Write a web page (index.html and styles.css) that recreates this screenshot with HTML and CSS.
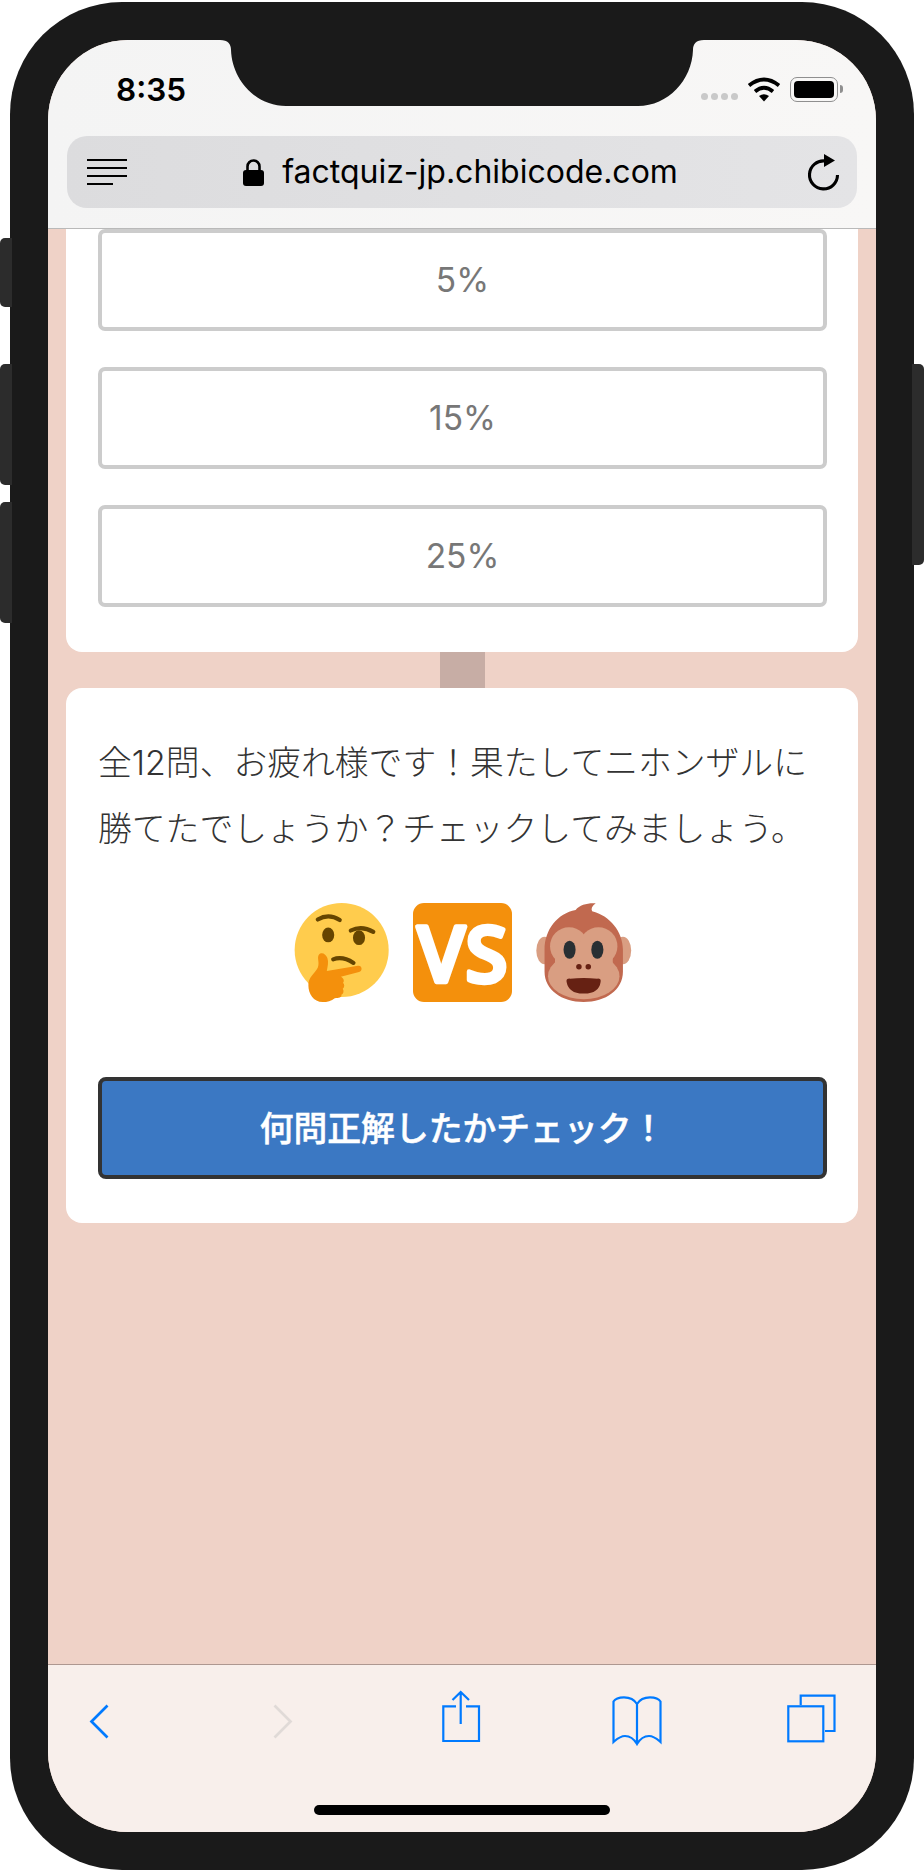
FILE: index.html
```html
<!DOCTYPE html>
<html lang="ja">
<head>
<meta charset="utf-8">
<title>factquiz-jp.chibicode.com</title>
<link rel="stylesheet" href="styles.css">
</head>
<body>
<div class="phone">
  <span class="side side-l side-mute"></span>
  <span class="side side-l side-up"></span>
  <span class="side side-l side-down"></span>
  <span class="side side-r"></span>
  <div class="screen">
    <svg class="notch" width="484" height="66" viewBox="0 0 484 66"><path d="M0 0H484C476 0 473 4 473 10C472 40 448 66 418 66H66C36 66 12 40 11 10C11 4 8 0 0 0Z"/></svg>
    <header class="topbar">
      <div class="status">
        <span class="time">8:35</span>
        <div class="status-icons">
          <div class="signal"><i></i><i></i><i></i><i></i></div>
          <svg class="wifi" width="34" height="25" viewBox="0 0 34 25"><path class="wifi-arc" d="M2 8.5Q17 -3.5 32 8.5"/><path class="wifi-arc" d="M8 14.5Q17 7 26 14.5"/><path d="M12 19Q17 15.5 22 19L17 24.5Z"/></svg>
          <div class="battery"><span class="battery-fill"></span></div>
          <span class="battery-nub"></span>
        </div>
      </div>
      <div class="address">
        <svg class="reader" width="40" height="26" viewBox="0 0 40 26"><path d="M0 1H40M0 9H40M0 17H40M0 25H26"/></svg>
        <div class="url-wrap">
          <svg class="lock" width="21" height="27" viewBox="0 0 21 27"><rect x="0" y="11" width="21" height="16" rx="3"/><path d="M4.5 12V7.5a6 6 0 0 1 12 0V12"/></svg>
          <span class="url">factquiz-jp.chibicode.com</span>
        </div>
        <svg class="reload" width="34" height="40" viewBox="0 0 34 40"><path class="reload-arc" d="M19 9A14 14 0 1 0 31.5 23"/><path d="M18 2L29 8.5L18 15Z"/></svg>
      </div>
    </header>

    <main class="content">
      <section class="card card-options">
        <div class="option">5%</div>
        <div class="option">15%</div>
        <div class="option">25%</div>
      </section>
      <div class="connector"></div>
      <section class="card card-result">
        <p class="message">全12問、お疲れ様です！果たしてニホンザルに勝てたでしょうか？チェックしてみましょう。</p>
        <div class="emoji-row">
          <svg class="emoji" viewBox="0 0 36 36">
            <circle cx="17.7" cy="17.1" r="17.1" fill="#FFCC4D"/>
            <path class="brow" d="M9 6Q13 3.6 17 6.2"/>
            <ellipse cx="12.8" cy="11.6" rx="2.2" ry="2.7" fill="#664500"/>
            <ellipse cx="24" cy="12.6" rx="2.2" ry="2.7" fill="#664500"/>
            <path class="brow" d="M21 10Q25 8 29.2 10.5"/>
            <path class="brow" d="M14.6 20.5Q18 19.2 22 21.8"/>
            <path fill="#F4900C" d="M5.6 30C5.4 27 8 25.5 9 23.5C9.8 21.5 8.6 20 9.4 18.8C10.4 17.6 12 18.6 12.5 20C13 21.5 12.6 23 12.3 24.7L23.6 22.8C25.2 22.6 25.4 24.7 24 25.1L17.4 26.8C18.4 27.2 18.8 28.4 18.2 29C18.8 29.6 18.8 30.6 18.1 31.2C18.6 32 18.4 33 17.6 33.4C17.8 34.4 16.6 34.6 15.2 34.6C14 35.6 12.4 36 10.8 36C7.4 36 5.6 33 5.6 30Z"/>
          </svg>
          <svg class="emoji" viewBox="0 0 36 36">
            <rect width="36" height="36" rx="4" fill="#F4900C"/>
            <text class="vs" x="18" y="28.8" text-anchor="middle">VS</text>
          </svg>
          <svg class="emoji" viewBox="0 0 36 36">
            <ellipse cx="4.2" cy="17.3" rx="3" ry="5" fill="#D99E82"/>
            <ellipse cx="32.7" cy="17.3" rx="3" ry="5" fill="#D99E82"/>
            <path fill="#C1694F" d="M15.5 2.5C17 .6 20 -.1 22.8 .1C21.5 1 21 2 21.5 3C28 4.6 32.7 10.5 32.7 17V25C32.7 31.5 26.5 36 18.4 36C10.4 36 4.2 31.5 4.2 25V17C4.2 9.5 9 3.7 15.5 2.5Z"/>
            <circle cx="13.1" cy="15.7" r="6.9" fill="#D99E82"/>
            <circle cx="23.8" cy="15.7" r="6.9" fill="#D99E82"/>
            <ellipse cx="18.45" cy="26.6" rx="13" ry="8.4" fill="#D99E82"/>
            <rect x="8" y="16" width="21" height="9" fill="#D99E82"/>
            <ellipse cx="13.3" cy="17" rx="2.2" ry="3.3" fill="#292F33"/>
            <ellipse cx="23.4" cy="17" rx="2.2" ry="3.3" fill="#292F33"/>
            <circle cx="16.7" cy="23.2" r="1" fill="#662113"/>
            <circle cx="20.1" cy="23.2" r="1" fill="#662113"/>
            <path fill="#662113" d="M12.2 28.6Q12 27.4 13.5 27.5Q18.4 27 23.4 27.5Q24.8 27.4 24.6 28.6Q24 33 18.4 32.9Q13 33 12.2 28.6Z"/>
          </svg>
        </div>
        <div class="check-button">何問正解したかチェック！</div>
      </section>
    </main>

    <footer class="toolbar">
      <div class="tools">
        <svg class="tool tool-chevron" viewBox="0 0 60 60"><path d="M38.5 16.5L22.5 32.5L38.5 48.5"/></svg>
        <svg class="tool tool-chevron tool-off" viewBox="0 0 60 60"><path d="M27.5 16.5L43.5 32.5L27.5 48.5"/></svg>
        <svg class="tool" viewBox="0 0 60 60"><path d="M31 17.3H18.3V52H54V17.3H41M35.7 35V3M27.5 11L35.7 3L44 11"/></svg>
        <svg class="tool" viewBox="0 0 60 60"><path d="M34 55V15C31 10 26 8.3 21 8.3C16 8.3 12 10 10.5 12.5V53C14 50 17 47 22 47C27 47 31 50 34 55C37 50 41 47 46 47C51 47 54 50 57.5 53V12.5C56 10 52 8.3 47 8.3C42 8.3 37 10 34 15"/></svg>
        <svg class="tool" viewBox="0 0 60 60"><rect x="7.3" y="17.3" width="35" height="35"/><path d="M19.7 16V6.7H53.5V42H44"/></svg>
      </div>
      <div class="home-indicator"></div>
    </footer>
  </div>
</div>
</body>
</html>
```

FILE: styles.css
```css
* { box-sizing: border-box; }

html, body {
  margin: 0;
  padding: 0;
  background: #fff;
}

body {
  width: 924px;
  height: 1870px;
  overflow: hidden;
  padding: 2px 10px 0;
  font-family: Inter, "Noto Sans CJK JP", "Noto Sans", sans-serif;
}

.phone {
  position: relative;
  width: 904px;
  height: 1868px;
  padding: 38px 38px 38px;
  background: #1a1a1a;
  border-radius: 112px;
}

.side {
  position: absolute;
  width: 12px;
  background: #2c2c2c;
}

.side-l {
  left: -10px;
  border-radius: 5px 0 0 5px;
}

.side-mute { top: 236px; height: 69px; }
.side-up { top: 362px; height: 121px; }
.side-down { top: 500px; height: 121px; }

.side-r {
  right: -10px;
  top: 362px;
  height: 201px;
  border-radius: 0 5px 5px 0;
}

.screen {
  position: relative;
  display: flex;
  flex-direction: column;
  height: 1792px;
  overflow: hidden;
  background: #efd2c7;
  border-radius: 80px;
}

.notch {
  position: absolute;
  top: 0;
  left: 172px;
  fill: #1a1a1a;
  z-index: 2;
}

.topbar {
  flex: none;
  height: 189px;
  background: linear-gradient(90deg, #f4f4f4, #f8f7f6);
  border-bottom: 1px solid #b9b9b9;
}

.status {
  display: flex;
  justify-content: space-between;
  height: 96px;
  padding: 28px 33px 0 68px;
}

.time {
  font-family: Inter, "Liberation Sans", sans-serif;
  font-size: 31.5px;
  font-weight: 600;
  line-height: 44px;
  color: #000;
}

.status-icons {
  display: flex;
  align-items: flex-start;
  padding-top: 9px;
}

.signal {
  display: flex;
  gap: 3px;
  margin: 16px 9px 0 0;
}

.signal i {
  width: 7px;
  height: 7px;
  border-radius: 50%;
  background: #c9c9c9;
}

.wifi path { fill: #000; }

.wifi .wifi-arc {
  fill: none;
  stroke: #000;
  stroke-width: 3.8;
}

.battery {
  width: 48px;
  height: 25px;
  margin-left: 9px;
  padding: 3px;
  border: 1.5px solid #8f8f8f;
  border-radius: 7px;
}

.battery-fill {
  display: block;
  height: 100%;
  background: #000;
  border-radius: 4px;
}

.battery-nub {
  width: 3px;
  height: 8px;
  margin: 8px 0 0 2px;
  background: #8f8f8f;
  border-radius: 0 3px 3px 0;
}

.address {
  display: flex;
  align-items: center;
  height: 72px;
  margin: 0 19px;
  padding: 0 17px 0 20px;
  background: linear-gradient(90deg, #dcdcde, #e4e4e6);
  border-radius: 20px;
}

.reader {
  flex: none;
  fill: none;
  stroke: #000;
  stroke-width: 1.8;
}

.url-wrap {
  flex: 1;
  display: flex;
  align-items: center;
  justify-content: center;
  gap: 18px;
  padding-right: 12px;
}

.lock { flex: none; }

.lock rect { fill: #000; }

.lock path {
  fill: none;
  stroke: #000;
  stroke-width: 2.6;
}

.url {
  font-family: Inter, "Liberation Sans", sans-serif;
  font-size: 32px;
  line-height: 40px;
  color: #000;
}

.reload { flex: none; }

.reload .reload-arc {
  fill: none;
  stroke: #000;
  stroke-width: 3.1;
}

.content {
  flex: 1;
  min-height: 0;
  overflow: hidden;
  padding: 0 18px;
}

.card {
  padding-left: 32px;
  padding-right: 31px;
  background: #fff;
  border-radius: 16px;
}

.card-options {
  display: flex;
  flex-direction: column;
  gap: 36px;
  padding-bottom: 45px;
  border-radius: 0 0 16px 16px;
}

.option {
  display: flex;
  align-items: center;
  justify-content: center;
  height: 102px;
  font-size: 33.5px;
  color: #777;
  border: 4px solid #ccc;
  border-radius: 7px;
}

.connector {
  width: 45px;
  height: 36px;
  margin: 0 auto;
  background: #c7ada5;
}

.card-result {
  padding-top: 42px;
  padding-bottom: 44px;
}

.message {
  margin: 0 0 41px;
  font-size: 33.8px;
  font-weight: 300;
  line-height: 66px;
  color: #333;
}

.emoji-row {
  display: flex;
  justify-content: center;
  gap: 21px;
  margin-bottom: 75px;
}

.emoji {
  display: block;
  width: 99px;
  height: 99px;
  overflow: visible;
}

.brow {
  fill: none;
  stroke: #664500;
  stroke-width: 1.5;
  stroke-linecap: round;
}

.vs {
  font-family: "Open Sans", sans-serif;
  font-size: 28px;
  font-weight: 600;
  fill: #fff;
  stroke: #fff;
  stroke-width: 1.6;
  stroke-linejoin: round;
}

.check-button {
  display: flex;
  align-items: center;
  justify-content: center;
  height: 102px;
  padding-bottom: 4px;
  font-size: 33.8px;
  font-weight: 500;
  -webkit-text-stroke: 0.5px #fff;
  color: #fff;
  background: #3b78c3;
  border: 4px solid #333;
  border-radius: 8px;
}

.toolbar {
  flex: none;
  height: 168px;
  padding-top: 24px;
  background: #f8efeb;
  border-top: 1px solid #ae9790;
}

.tools {
  display: flex;
  gap: 118px;
  padding-left: 21px;
}

.tool {
  flex: none;
  width: 60px;
  height: 60px;
  fill: none;
  stroke: #007aff;
  stroke-width: 2.2;
}

.tool-chevron { stroke-width: 2.7; }

.tool-off { stroke: #e0dad7; }

.home-indicator {
  width: 296px;
  height: 10px;
  margin: 56px auto 0;
  background: #000;
  border-radius: 5px;
}
```
